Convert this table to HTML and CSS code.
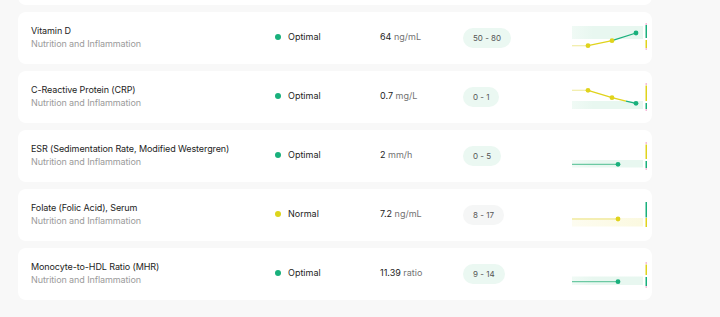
FILE: index.html
```html
<!DOCTYPE html>
<html lang="en">
<head>
<meta charset="utf-8">
<title>Biomarkers</title>
<link rel="stylesheet" href="styles.css">
</head>
<body>
<div class="list">
  <div class="card card-prev"></div>

  <div class="card">
    <div class="name"><div class="title">Vitamin D</div><div class="sub">Nutrition and Inflammation</div></div>
    <div class="status"><span class="dot green"></span>Optimal</div>
    <div class="value"><span class="num">64</span> ng/mL</div>
    <div><span class="pill mint">50 - 80</span></div>
    <div class="chart">
      <svg width="78" height="30" viewBox="0 0 78 30">
        <defs>
          <linearGradient id="bandG" x1="0" x2="1" y1="0" y2="0">
            <stop offset="0" stop-color="#f0faf5"/>
            <stop offset="0.3" stop-color="#e8f7f0"/>
            <stop offset="1" stop-color="#e8f7f0"/>
          </linearGradient>
          <linearGradient id="bandY" x1="0" x2="1" y1="0" y2="0">
            <stop offset="0" stop-color="#fdfcf0"/>
            <stop offset="1" stop-color="#fbf9e0"/>
          </linearGradient>
        </defs>
        <rect x="2" y="4" width="71" height="13" fill="url(#bandG)"/>
        <line x1="2" y1="23.7" x2="18" y2="23.7" stroke="#f1eca6" stroke-width="1.2"/>
        <polyline points="18,23.7 42,18.7" fill="none" stroke="#e0d31c" stroke-width="1.3"/>
        <polyline points="42,18.7 66,11" fill="none" stroke="#19b07c" stroke-width="1.3"/>
        <circle cx="18" cy="23.7" r="2.4" fill="#e0d31c"/>
        <circle cx="42" cy="18.7" r="2.4" fill="#e0d31c"/>
        <circle cx="66" cy="11" r="2.4" fill="#19b07c"/>
        <rect x="75.5" y="1.5" width="1.5" height="1" fill="#f07ab8"/>
        <rect x="75.5" y="3" width="1.5" height="13" fill="#19b07c"/>
        <rect x="75.5" y="18" width="1.5" height="8" fill="#e0d31c"/>
        <rect x="75.5" y="26.5" width="1.5" height="1" fill="#f07ab8"/>
      </svg>
    </div>
  </div>

  <div class="card">
    <div class="name"><div class="title">C-Reactive Protein (CRP)</div><div class="sub">Nutrition and Inflammation</div></div>
    <div class="status"><span class="dot green"></span>Optimal</div>
    <div class="value"><span class="num">0.7</span> mg/L</div>
    <div><span class="pill mint">0 - 1</span></div>
    <div class="chart">
      <svg width="78" height="30" viewBox="0 0 78 30">
        <rect x="2" y="20" width="71" height="8" fill="url(#bandG)"/>
        <line x1="2" y1="9.3" x2="18" y2="9.3" stroke="#f1eca6" stroke-width="1.2"/>
        <polyline points="18,9.3 42,16.7 56,20.2" fill="none" stroke="#e0d31c" stroke-width="1.3"/>
        <polyline points="56,20.2 66,22.3" fill="none" stroke="#19b07c" stroke-width="1.3"/>
        <circle cx="18" cy="9.3" r="2.4" fill="#e0d31c"/>
        <circle cx="42" cy="16.7" r="2.4" fill="#e0d31c"/>
        <circle cx="66" cy="22.3" r="2.4" fill="#19b07c"/>
        <rect x="75.5" y="2.5" width="1.5" height="1" fill="#f07ab8"/>
        <rect x="75.5" y="4.5" width="1.5" height="15.5" fill="#e0d31c"/>
        <rect x="75.5" y="22" width="1.5" height="6" fill="#19b07c"/>
        <rect x="75.5" y="28.5" width="1.5" height="1" fill="#f07ab8"/>
      </svg>
    </div>
  </div>

  <div class="card">
    <div class="name"><div class="title">ESR (Sedimentation Rate, Modified Westergren)</div><div class="sub">Nutrition and Inflammation</div></div>
    <div class="status"><span class="dot green"></span>Optimal</div>
    <div class="value"><span class="num">2</span> mm/h</div>
    <div><span class="pill mint">0 - 5</span></div>
    <div class="chart">
      <svg width="78" height="30" viewBox="0 0 78 30">
        <rect x="2" y="20" width="71" height="7.5" fill="url(#bandG)"/>
        <line x1="2" y1="24.3" x2="48" y2="24.3" stroke="#6cc9a3" stroke-width="1.2"/>
        <circle cx="48" cy="24.3" r="2.4" fill="#19b07c"/>
        <rect x="75.5" y="2.5" width="1.5" height="1" fill="#f07ab8"/>
        <rect x="75.5" y="4.5" width="1.5" height="14.5" fill="#e0d31c"/>
        <rect x="75.5" y="21" width="1.5" height="7" fill="#19b07c"/>
        <rect x="75.5" y="28.5" width="1.5" height="1" fill="#f07ab8"/>
      </svg>
    </div>
  </div>

  <div class="card">
    <div class="name"><div class="title">Folate (Folic Acid), Serum</div><div class="sub">Nutrition and Inflammation</div></div>
    <div class="status"><span class="dot yellow"></span>Normal</div>
    <div class="value"><span class="num">7.2</span> ng/mL</div>
    <div><span class="pill grey">8 - 17</span></div>
    <div class="chart">
      <svg width="78" height="30" viewBox="0 0 78 30">
        <rect x="2" y="19" width="71" height="8.5" fill="url(#bandY)"/>
        <line x1="2" y1="20" x2="48" y2="20" stroke="#ece17a" stroke-width="1.2"/>
        <circle cx="48" cy="20" r="2.4" fill="#e0d31c"/>
        <rect x="75.5" y="3" width="1.5" height="15.5" fill="#19b07c"/>
        <rect x="75.5" y="19" width="1.5" height="9" fill="#e0d31c"/>
      </svg>
    </div>
  </div>

  <div class="card">
    <div class="name"><div class="title">Monocyte-to-HDL Ratio (MHR)</div><div class="sub">Nutrition and Inflammation</div></div>
    <div class="status"><span class="dot green"></span>Optimal</div>
    <div class="value"><span class="num">11.39</span> ratio</div>
    <div><span class="pill mint">9 - 14</span></div>
    <div class="chart">
      <svg width="78" height="30" viewBox="0 0 78 30">
        <rect x="2" y="18.5" width="71" height="8.5" fill="url(#bandG)"/>
        <line x1="2" y1="23.7" x2="48" y2="23.7" stroke="#6cc9a3" stroke-width="1.2"/>
        <circle cx="48" cy="23.7" r="2.4" fill="#19b07c"/>
        <rect x="75.5" y="4.5" width="1.5" height="1" fill="#f07ab8"/>
        <rect x="75.5" y="6.5" width="1.5" height="10.5" fill="#e0d31c"/>
        <rect x="75.5" y="19" width="1.5" height="9" fill="#19b07c"/>
        <rect x="75.5" y="28.5" width="1.5" height="1" fill="#f07ab8"/>
      </svg>
    </div>
  </div>
</div>
</body>
</html>
```

FILE: styles.css
```css
html, body {
  margin: 0;
  padding: 0;
  background: #f8f8f8;
  font-family: Inter, "Noto Sans", "Liberation Sans", sans-serif;
  color: #1d1d1d;
  overflow: hidden;
}

.list {
  display: flex;
  flex-direction: column;
  gap: 7px;
  margin-top: -47px;
  padding-left: 18px;
}

.card {
  width: 634px;
  height: 52px;
  flex: none;
  box-sizing: border-box;
  background: #fff;
  border-radius: 8px;
  padding: 0 0 3px 13px;
  display: grid;
  grid-template-columns: 244px 105px 83px 109px 78px;
  align-items: center;
}

.title {
  font-size: 9px;
  line-height: 13px;
  color: #1d1d1d;
  letter-spacing: -0.1px;
}

.sub {
  font-size: 9px;
  line-height: 13px;
  color: #9b9b9b;
  letter-spacing: -0.1px;
}

.status {
  display: flex;
  align-items: center;
  font-size: 9px;
  color: #1d1d1d;
}

.dot {
  width: 6px;
  height: 6px;
  border-radius: 50%;
  margin-right: 7px;
}
.dot.green { background: #19b07c; }
.dot.yellow { background: #dcd51c; }

.value {
  font-size: 9px;
  color: #737373;
}
.value .num {
  color: #1d1d1d;
}

.pill {
  display: inline-flex;
  align-items: center;
  justify-content: center;
  height: 20px;
  padding: 0 10px;
  border-radius: 10px;
  font-size: 8px;
  color: #555;
}
.pill.mint { background: #ebf8f2; }
.pill.grey { background: #f5f6f6; }

.chart {
  height: 30px;
  margin-left: -2px;
}
.chart svg { display: block; }
```
